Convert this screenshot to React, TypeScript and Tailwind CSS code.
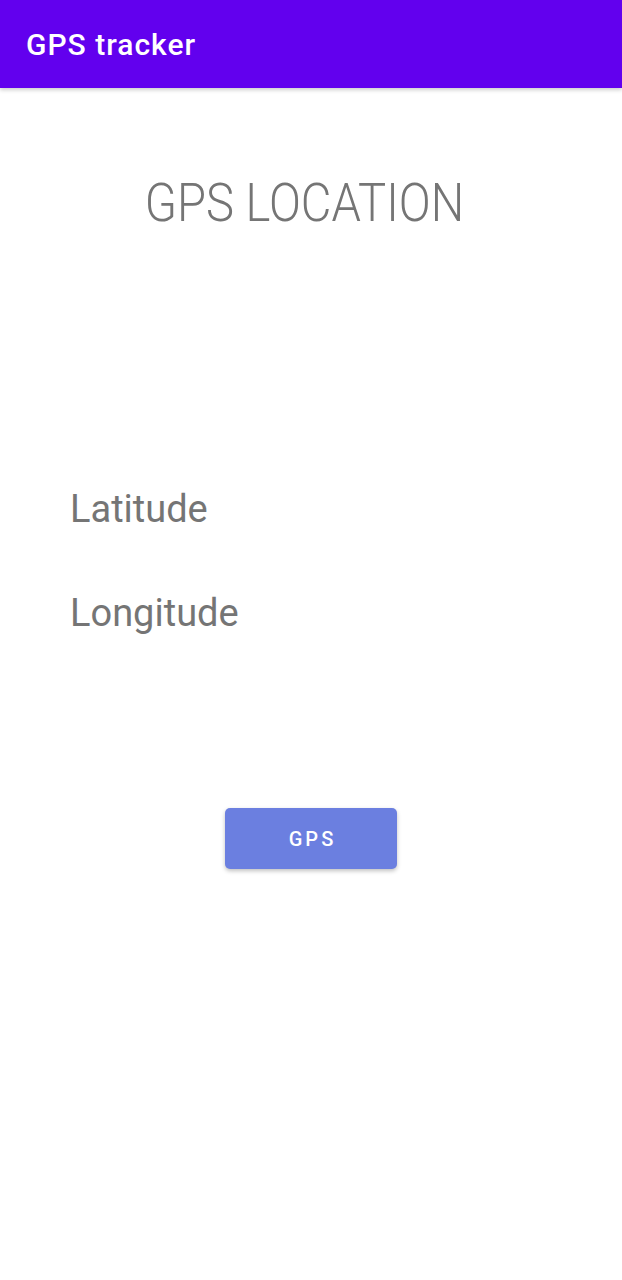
export default function App() {
  return (
    <div className="min-h-[1280px] bg-white" style={{ fontFamily: 'Roboto, "Noto Sans", sans-serif' }}>
      <div className="h-[88px] bg-[#6200ee] flex items-center px-[26px] pt-[1px] shadow-[0_2px_4px_rgba(0,0,0,0.2)]">
        <h1 className="text-white text-[30px] font-medium leading-none tracking-[1px]">GPS tracker</h1>
      </div>
      <div className="flex flex-col">
        <div className="mt-[89px] flex justify-center pr-[14px]">
          <h2 className="inline-block scale-x-[0.89] text-[#757575] text-[53px] font-light leading-none whitespace-nowrap">
            GPS LOCATION
          </h2>
        </div>
        <div className="mt-[260px] pl-[70px] flex flex-col gap-[66px] text-[#757575] text-[38px] leading-none">
          <span>Latitude</span>
          <span>Longitude</span>
        </div>
        <div className="mt-[176px] flex justify-center">
          <button className="w-[172px] h-[61px] rounded-[5px] bg-[#6b7fe0] text-white text-[20px] font-medium tracking-[3px] pl-[3px] shadow-[0_2px_4px_rgba(0,0,0,0.25)]">
            GPS
          </button>
        </div>
      </div>
    </div>
  );
}
